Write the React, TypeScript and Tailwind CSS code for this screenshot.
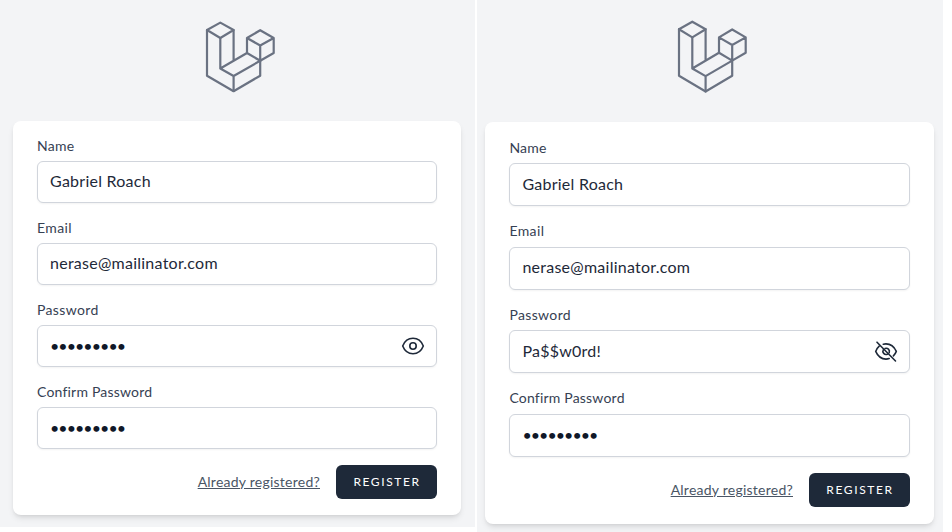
type FieldProps = {
  label: string;
  labelClass: string;
  value: string;
  valueClass: string;
  tall?: boolean;
  icon?: "eye" | "eye-off";
};

const DOTS = "•••••••••";

function Logo({ className }: { className: string }) {
  return (
    <svg
      className={className}
      viewBox="0 0 80 80"
      preserveAspectRatio="none"
      fill="none"
      stroke="currentColor"
      strokeWidth="2.2"
      strokeLinejoin="round"
      strokeLinecap="round"
    >
      <path d="M10 13 23.3 5.6 36.6 13 23.3 21Z" />
      <path d="M10 13V58.7L36.6 74.2 63.2 58.7V43.8" />
      <path d="M23.3 21V51.5L36.6 59V74M36.6 13V43.8M23.3 51.5 50 36M36.6 59 63.2 43.8" />
      <path d="M50 21 63.2 13.2 76.7 21 63.2 28.5ZM50 21V36L63.2 43.8 76.7 36V21M63.2 28.5V43.8" />
    </svg>
  );
}

function Eye({ off }: { off: boolean }) {
  return (
    <svg
      className="size-6 text-gray-800"
      viewBox="0 0 24 24"
      fill="none"
      stroke="currentColor"
      strokeWidth="1.6"
      strokeLinecap="round"
      strokeLinejoin="round"
    >
      {off ? (
        <>
          <path d="M3 2.2 21.5 21" />
          <path d="M9.3 4.2A11 11 0 0 1 12 3.9C17 3.9 20.5 7.4 22.3 11.4A13 13 0 0 1 19.4 15.9" />
          <path d="M5.2 6.1A12.5 12.5 0 0 0 1.7 11.4C3.6 15.8 7.2 19.1 12 19.1A10.5 10.5 0 0 0 15.2 18.6" />
          <path d="M11 8.5A3.2 3.2 0 0 1 15.2 12.6" />
          <path d="M9.4 9.6A3.2 3.2 0 0 0 13.4 14.2" />
        </>
      ) : (
        <>
          <path d="M1.7 12C3.5 7.4 7.2 4.3 12 4.3S20.5 7.4 22.3 12C20.5 16.6 16.8 19.7 12 19.7S3.5 16.6 1.7 12Z" />
          <circle cx="12" cy="12" r="3.2" />
        </>
      )}
    </svg>
  );
}

function Field({ label, labelClass, value, valueClass, tall, icon }: FieldProps) {
  return (
    <div>
      <div className={`text-sm text-gray-700 ${tall ? "h-[20.5px] leading-[18px]" : "h-5 leading-[18px]"}`}>
        <span className={labelClass}>{label}</span>
      </div>
      <div
        className={`mt-1 flex items-center justify-between rounded-md border border-gray-300 bg-white pr-[11px] pl-3 text-base shadow-xs ${
          tall ? "h-[43px]" : "h-[42px]"
        }`}
      >
        <span className={`whitespace-nowrap ${valueClass}`}>{value}</span>
        {icon && <Eye off={icon === "eye-off"} />}
      </div>
    </div>
  );
}

function RegisterForm({ tall = false }: { tall?: boolean }) {
  const dots = "tracking-[-0.94px] text-gray-900";
  const text = "pb-0.5 tracking-[0.25px] text-gray-800";
  return (
    <div
      className={`flex flex-col gap-4 rounded-lg bg-white px-6 shadow-md ${
        tall ? "h-[402px] w-[448.6px] pt-[16.5px]" : "h-[394px] w-[448px] pt-4"
      }`}
    >
      <Field tall={tall} label="Name" labelClass="tracking-[0.25px]" value="Gabriel Roach" valueClass={text} />
      <Field tall={tall} label="Email" labelClass="tracking-[0.4px]" value="nerase@mailinator.com" valueClass={text} />
      <Field
        tall={tall}
        label="Password"
        labelClass="tracking-[0.36px]"
        value={tall ? "Pa$$w0rd!" : DOTS}
        valueClass={tall ? text : dots}
        icon={tall ? "eye-off" : "eye"}
      />
      <Field tall={tall} label="Confirm Password" labelClass="tracking-[0.2px]" value={DOTS} valueClass={dots} />
      <div className="flex items-center justify-end gap-4">
        <a className={`text-sm tracking-[0.24px] text-gray-600 underline ${tall ? "" : "pb-px"}`}>
          Already registered?
        </a>
        <button
          className={`w-[101px] rounded-md bg-gray-800 pl-px text-xs tracking-[1.6px] text-white uppercase ${
            tall ? "h-[34.5px]" : "h-[34px]"
          }`}
        >
          Register
        </button>
      </div>
    </div>
  );
}

export default function App() {
  return (
    <div className="flex h-[532px] w-[952px] gap-[2px] overflow-hidden bg-white font-['Lato',sans-serif]">
      <div className="h-[527px] w-[475px] overflow-hidden bg-gray-100 pt-[17px] pl-[13px]">
        <Logo className="ml-[184px] h-20 w-20 text-gray-500" />
        <div className="mt-6">
          <RegisterForm />
        </div>
      </div>
      <div className="h-[532px] w-[466px] overflow-hidden bg-gray-100 pt-4 pl-[8.4px]">
        <Logo className="ml-[184px] h-[81.5px] w-20 text-gray-500" />
        <div className="mt-[24.5px]">
          <RegisterForm tall />
        </div>
      </div>
    </div>
  );
}
